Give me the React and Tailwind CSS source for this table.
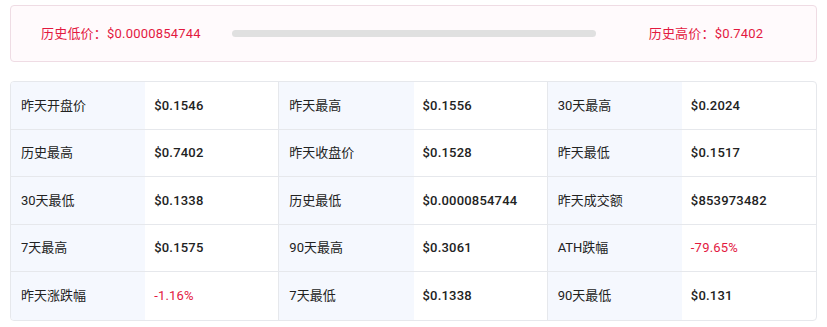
import React from "react";

const ROWS = [
  [["昨天开盘价", "$0.1546"], ["昨天最高", "$0.1556"], ["30天最高", "$0.2024"]],
  [["历史最高", "$0.7402"], ["昨天收盘价", "$0.1528"], ["昨天最低", "$0.1517"]],
  [["30天最低", "$0.1338"], ["历史最低", "$0.0000854744"], ["昨天成交额", "$853973482"]],
  [["7天最高", "$0.1575"], ["90天最高", "$0.3061"], ["ATH跌幅", "-79.65%", true]],
  [["昨天涨跌幅", "-1.16%", true], ["7天最低", "$0.1338"], ["90天最低", "$0.131"]],
];

const ROW_H = ["h-[48px]", "h-[47px]", "h-[48px]", "h-[47px]", "h-[48px]"];

const App = () => {
  return (
    <div
      className="w-[827px] h-[327px] bg-white pt-[5px] px-[10px]"
      style={{ fontFamily: 'Roboto, "Noto Sans CJK SC", sans-serif' }}
    >
      <div className="h-[57px] flex items-center border border-[#efdce4] rounded-[4px] bg-[#fffafc] pl-[30px] text-[13px] text-[#e3193f] tracking-[0.2px]">
        <span>历史低价：$0.0000854744</span>
        <div className="ml-[31px] w-[364px] h-[7px] rounded-full bg-[#e0e0e0]" />
        <span className="ml-[53px]">历史高价：$0.7402</span>
      </div>

      <div className="mt-[19px] border border-[#e6e8ec] rounded-[4px] overflow-hidden">
        {ROWS.map((row, ri) => (
          <div
            key={ri}
            className={`grid grid-cols-6 ${ROW_H[ri]} ${ri < ROWS.length - 1 ? "border-b border-[#e6e8ec]" : ""}`}
          >
            {row.map(([label, value, red], ci) => (
              <React.Fragment key={ci}>
                <div className="flex items-center pl-[10px] bg-[#f5f8fe] text-[13px] text-[#222]">
                  {label}
                </div>
                <div
                  className={`flex items-center pl-[9px] text-[13px] tracking-[0.2px] ${red ? "text-[#e3193f] font-normal" : "text-[#222] font-medium"} ${ci < 2 ? "border-r border-[#e6e8ec]" : ""}`}
                >
                  {value}
                </div>
              </React.Fragment>
            ))}
          </div>
        ))}
      </div>
    </div>
  );
};

export default App;
